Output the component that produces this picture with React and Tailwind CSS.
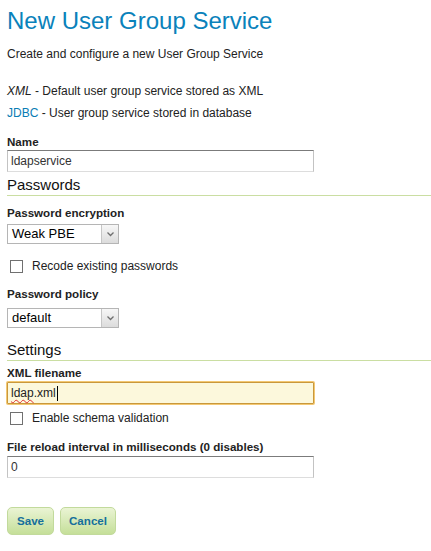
import React, { useState } from 'react';

const Label = ({ children, className = '' }) => (
  <div className={`h-[14px] leading-[14px] text-[11.6px] font-bold text-[#222] ${className}`}>
    {children}
  </div>
);

const Heading = ({ children, className = '' }) => (
  <div className={`h-[20px] leading-[18px] text-[15px] text-[#111] border-b border-[#cadea2] ${className}`}>
    {children}
  </div>
);

const TextInput = ({ value, className = '' }) => (
  <div
    className={`w-[307px] h-[22px] flex items-center pl-[3px] text-[12px] text-[#333] bg-white border border-t-[#7b7b7b] border-l-[#c3c3c3] border-r-[#c3c3c3] border-b-[#dddddd] ${className}`}
  >
    {value}
  </div>
);

const Select = ({ value, className = '' }) => (
  <div
    className={`relative w-[112px] h-[20px] flex items-center pl-[4px] text-[13px] text-black bg-white border border-[#b5b5b5] ${className}`}
  >
    {value}
    <div className="absolute right-0 top-0 w-[17px] h-[18px] flex items-center justify-center bg-gradient-to-b from-[#f7f7f7] to-[#dcdcdc] border-l border-[#c6c6c6]">
      <svg width="7" height="5" viewBox="0 0 7 5">
        <path d="M0.5 0.5 L3.5 3.5 L6.5 0.5" fill="none" stroke="#6f6f6f" strokeWidth="1.3" />
      </svg>
    </div>
  </div>
);

const Checkbox = ({ label, checked, onChange, className = '' }) => (
  <label className={`h-[14px] flex items-center cursor-pointer ${className}`}>
    <span
      onClick={onChange}
      className="ml-[3px] w-[13px] h-[13px] border border-[#707070] bg-white flex items-center justify-center"
    >
      {checked && (
        <svg width="9" height="9" viewBox="0 0 9 9">
          <path d="M1 4.5 L3.5 7 L8 1.5" fill="none" stroke="#333" strokeWidth="1.5" />
        </svg>
      )}
    </span>
    <span className="ml-[9px] text-[12px] text-[#222]">{label}</span>
  </label>
);

const Button = ({ children, className = '' }) => (
  <button
    className={`h-[28px] rounded-[5px] border border-[#c2da9c] bg-gradient-to-b from-[#eaf4d4] to-[#c5df99] text-[11.6px] font-bold text-[#156f9c] ${className}`}
  >
    {children}
  </button>
);

export default function App() {
  const [recode, setRecode] = useState(false);
  const [schema, setSchema] = useState(false);

  return (
    <div className="w-[431px] h-[551px] bg-white pl-[7px] flex flex-col font-['Liberation_Sans',Arial,sans-serif] overflow-hidden">
      <h1 className="mt-[9px] h-[24px] leading-[24px] text-[24px] text-[#0a82bb]">New User Group Service</h1>
      <p className="mt-[13px] h-[16px] leading-[16px] text-[12px] text-[#222]">
        Create and configure a new User Group Service
      </p>

      <p className="mt-[21px] h-[16px] leading-[16px] text-[12px] text-[#222]">
        <span className="italic">XML</span> - Default user group service stored as XML
      </p>
      <p className="mt-[6px] h-[16px] leading-[16px] text-[12px] text-[#222]">
        <a className="text-[#0a7db4]">JDBC</a> - User group service stored in database
      </p>

      <Label className="mt-[14px]">Name</Label>
      <TextInput className="mt-[1px]" value="ldapservice" />

      <Heading className="mt-[4px]">Passwords</Heading>

      <Label className="mt-[10px]">Password encryption</Label>
      <Select className="mt-[4px]" value="Weak PBE" />

      <Checkbox
        className="mt-[15px]"
        label="Recode existing passwords"
        checked={recode}
        onChange={() => setRecode(!recode)}
      />

      <Label className="mt-[14px]">Password policy</Label>
      <Select className="mt-[7px]" value="default" />

      <Heading className="mt-[13px]">Settings</Heading>

      <Label className="mt-[5px]">XML filename</Label>
      <div className="mt-[2px] w-[307px] h-[22px] flex items-center pl-[3px] text-[12px] text-[#222] bg-[#fcf8dc] border border-[#c9983c] shadow-[0_0_0_1px_#f3c873] rounded-[1px]">
        <span className="underline decoration-wavy decoration-[#e03030] decoration-1 underline-offset-2">ldap</span>
        <span>.xml</span>
        <span className="ml-[1px] w-px h-[15px] bg-black" />
      </div>

      <Checkbox
        className="mt-[7px]"
        label="Enable schema validation"
        checked={schema}
        onChange={() => setSchema(!schema)}
      />

      <Label className="mt-[15px]">File reload interval in milliseconds (0 disables)</Label>
      <TextInput className="mt-[2px] h-[21px]" value="0" />

      <div className="mt-[29px] flex gap-[6px]">
        <Button className="w-[47px]">Save</Button>
        <Button className="w-[56px]">Cancel</Button>
      </div>
    </div>
  );
}
